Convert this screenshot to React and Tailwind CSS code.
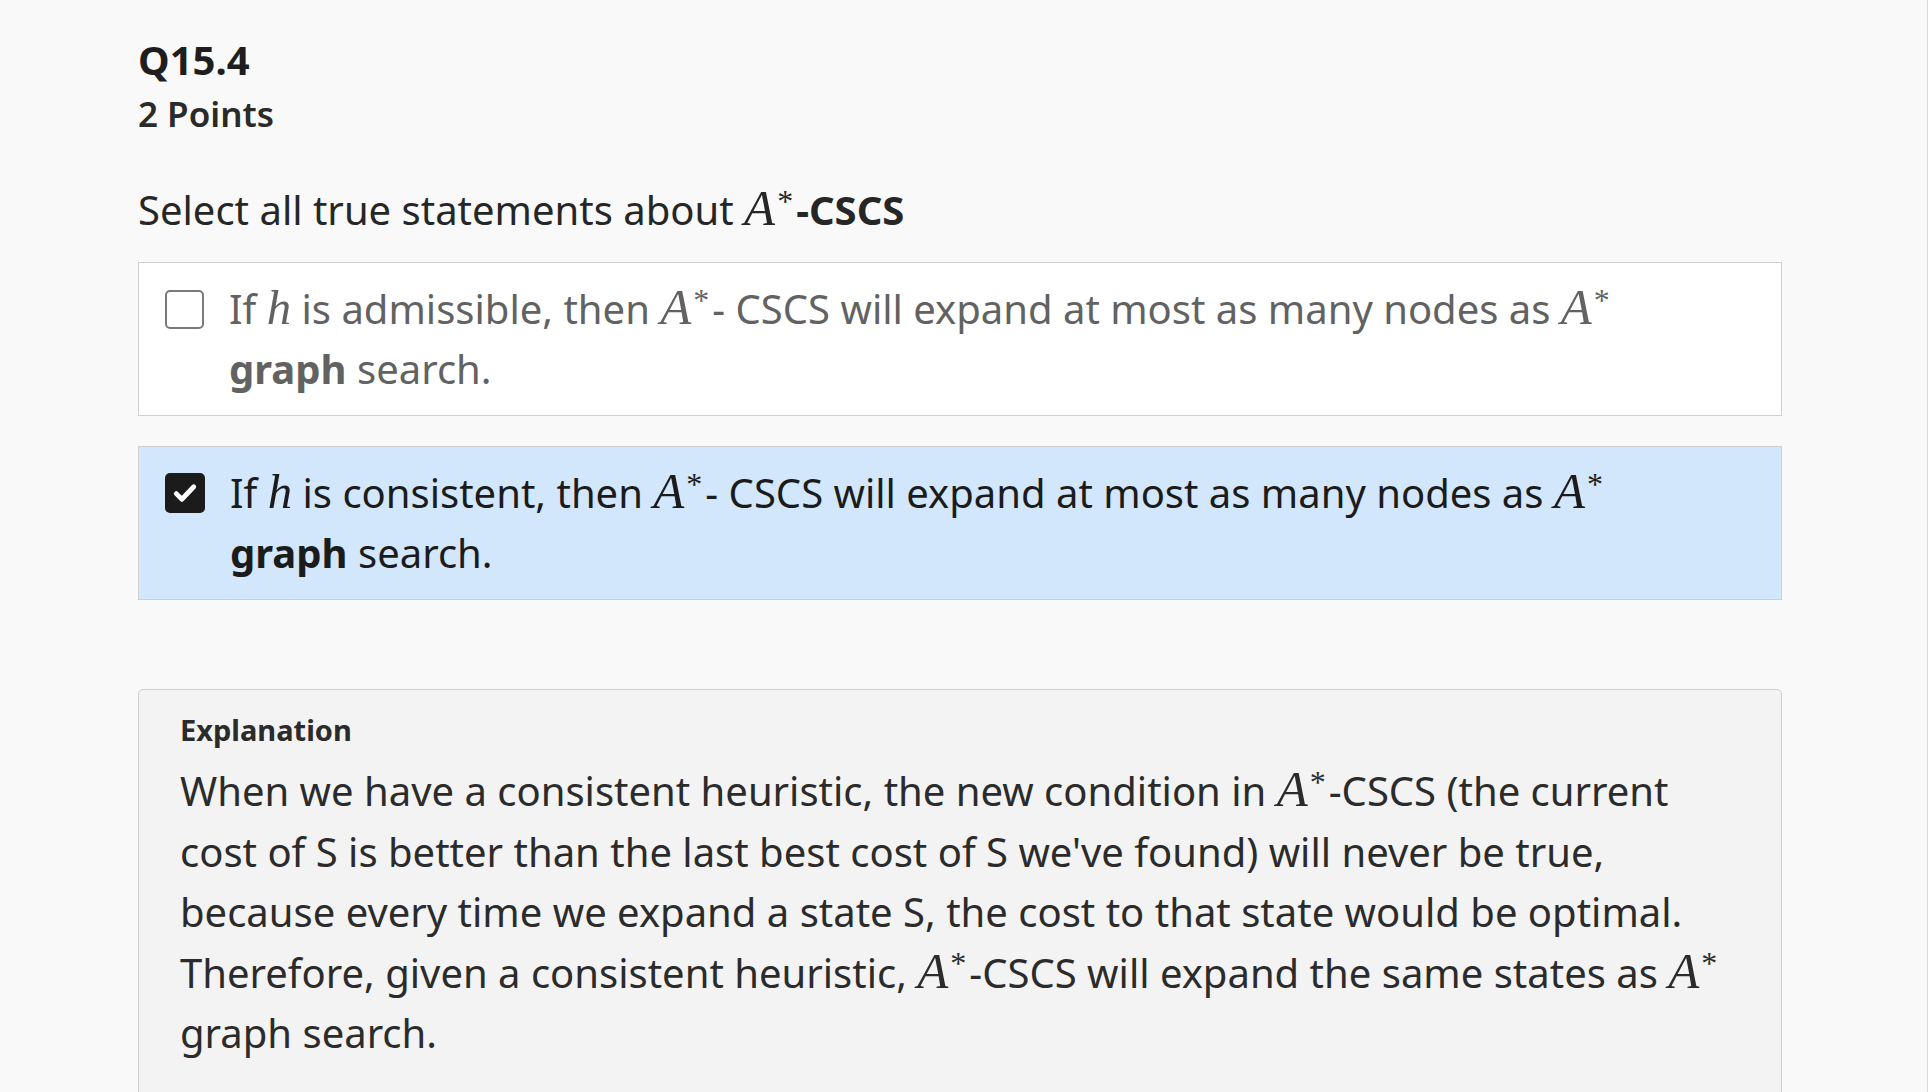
import React from 'react'

// inline math, styled like KaTeX output
function M({ children }) {
  return <span className="font-['Liberation_Serif',serif] italic text-[1.22em] leading-none">{children}</span>
}

function AStar() {
  return (
    <span className="font-['Liberation_Serif',serif] leading-none whitespace-nowrap">
      <span className="italic text-[1.27em]">A</span>
      <span className="relative -top-[0.42em] text-[0.8em] ml-[2px] mr-[3px]">*</span>
    </span>
  )
}

function Checkbox({ checked }) {
  if (checked) {
    return (
      <span className="mt-[10px] w-[40px] h-[40px] shrink-0 rounded-[5px] bg-[#1b1b1b] flex items-center justify-center">
        <svg className="w-[30px] h-[30px]" viewBox="0 0 24 24" fill="none" stroke="white" strokeWidth={3.8} strokeLinecap="round" strokeLinejoin="round">
          <path d="M5 12.5l4.5 4.5L19 7" />
        </svg>
      </span>
    )
  }
  return <span className="mt-[11px] w-[39px] h-[39px] shrink-0 rounded-[5px] border-2 border-[#7a7a7a] bg-white" />
}

function Option({ checked, children }) {
  return (
    <div
      className={
        checked
          ? 'flex gap-[25px] border border-[#cfcfcf] bg-[#d2e7fb] pl-[26px] pr-[80px] pt-[16px] pb-[16px] text-[#1b1b1b]'
          : 'flex gap-[25px] border border-[#cfcfcf] bg-white pl-[26px] pr-[80px] pt-[16px] pb-[16px] text-[#626262]'
      }
    >
      <Checkbox checked={checked} />
      <div className="text-[40px] leading-[60px]">{children}</div>
    </div>
  )
}

export default function App() {
  return (
    <div className="min-h-screen bg-[#f9f9f9] flex font-['Noto_Sans',sans-serif] text-[#232323] overflow-hidden">
      <div className="flex-1 h-[1092px] overflow-hidden pl-[138px]">
        <div className="w-[1644px]">
          <div className="pt-[36px]">
            <h2 className="text-[40px] leading-[48px] font-bold text-[#1e1e1e]">Q15.4</h2>
            <div className="text-[35px] leading-[44px] font-semibold text-[#2a2a2a] mt-[8px]">2 Points</div>
          </div>

          <p className="mt-[44px] text-[40px] leading-[60px] text-[#262626]">
            Select all true statements about <AStar />
            <span className="font-bold">-CSCS</span>
          </p>

          <div className="mt-[22px] flex flex-col gap-[30px]">
            <Option checked={false}>
              If <M>h</M> is admissible, then <AStar />- CSCS will expand at most as many nodes as <AStar />{' '}
              <span className="font-bold">graph</span> search.
            </Option>
            <Option checked>
              If <M>h</M> is consistent, then <AStar />- CSCS will expand at most as many nodes as <AStar />{' '}
              <span className="font-bold">graph</span> search.
            </Option>
          </div>

          <div className="mt-[89px] rounded-t-[5px] border border-[#cfcfcf] bg-[#f3f3f3] pl-[41px] pr-[42px] pt-[20px] pb-[80px]">
            <div className="text-[29px] leading-[40px] font-bold text-[#2b2b2b]">Explanation</div>
            <p className="mt-[11px] text-[40px] leading-[60.5px] text-[#2b2b2b]">
              When we have a consistent heuristic, the new condition in <AStar />-CSCS (the current cost of S is
              better than the last best cost of S we've found) will never be true, because every time we expand a
              state S, the cost to that state would be optimal. Therefore, given a consistent heuristic,{' '}
              <AStar />-CSCS will expand the same states as <AStar /> graph search.
            </p>
          </div>
        </div>
      </div>
      <div className="w-[3px] h-[1092px] border-l border-[#dcdcdc] bg-white" />
    </div>
  )
}
